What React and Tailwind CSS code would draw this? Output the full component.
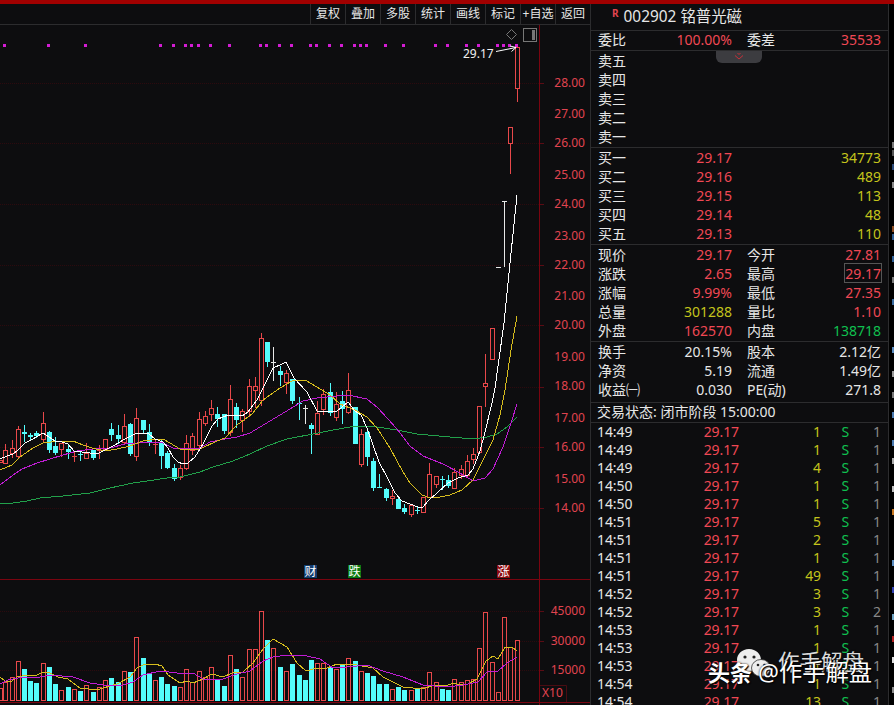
import React from "react";

const UP = "#e8484a";
const DOWN = "#54fcfc";
const FLAT = "#e8e8e8";

// x, type (u = up, d = down, f = flat), high, body top, body bottom, low, volume top, volume type
const candles = [
  [0, "u", 460, 460, 462, 462, 688],
  [5, "u", 444, 450, 463, 463, 682],
  [12, "u", 440, 448, 453, 457, 677],
  [18, "u", 426, 429, 456, 457, 661],
  [24, "d", 425, 432, 433, 441, 669],
  [30, "d", 433, 435, 436, 440, 681],
  [36, "d", 431, 433, 435, 437, 683],
  [43, "u", 412, 423, 439, 441, 663],
  [49, "d", 431, 432, 449, 452, 667],
  [55, "d", 437, 446, 452, 454, 684],
  [61, "u", 443, 443, 449, 456, 690],
  [68, "d", 444, 449, 451, 458, 687],
  [74, "u", 451, 456, 456, 461, 689],
  [80, "d", 450, 454, 454, 460, 691],
  [86, "u", 443, 453, 458, 458, 685],
  [93, "d", 450, 450, 457, 459, 692],
  [99, "u", 445, 450, 450, 458, 687],
  [105, "u", 439, 439, 449, 450, 680],
  [111, "d", 423, 429, 434, 440, 678],
  [118, "d", 425, 435, 438, 443, 682],
  [124, "u", 414, 426, 442, 444, 671],
  [130, "d", 423, 424, 453, 455, 672],
  [136, "u", 408, 418, 456, 460, 637],
  [143, "d", 420, 420, 429, 433, 658],
  [149, "d", 424, 432, 442, 445, 673],
  [155, "u", 439, 444, 444, 453, 680],
  [161, "d", 439, 443, 455, 468, 677],
  [167, "d", 451, 453, 467, 468, 684],
  [174, "d", 464, 468, 478, 480, 686],
  [180, "u", 465, 468, 477, 479, 687],
  [186, "u", 435, 443, 468, 469, 669],
  [192, "u", 433, 436, 450, 454, 682],
  [199, "u", 412, 419, 445, 447, 671],
  [205, "u", 411, 416, 423, 425, 677],
  [211, "u", 400, 408, 414, 420, 667],
  [217, "d", 407, 414, 418, 426, 679],
  [224, "d", 414, 414, 430, 433, 686],
  [230, "u", 385, 399, 432, 435, 655],
  [236, "d", 403, 407, 419, 427, 669],
  [242, "u", 409, 411, 420, 431, 677],
  [249, "u", 379, 386, 411, 416, 649],
  [255, "u", 377, 386, 390, 407, 649],
  [261, "u", 333, 338, 400, 405, 611],
  [267, "d", 342, 342, 361, 366, 640],
  [273, "f", 347, 362, 362, 380, 648, "u"],
  [280, "d", 366, 371, 374, 385, 667],
  [286, "u", 370, 373, 382, 393, 671],
  [292, "d", 379, 379, 400, 403, 664],
  [299, "d", 397, 403, 403, 419, 675],
  [305, "f", 405, 408, 408, 423, 680, "d"],
  [311, "d", 423, 425, 428, 453, 660],
  [317, "u", 401, 413, 434, 434, 663],
  [323, "u", 389, 394, 409, 414, 663],
  [330, "d", 383, 392, 412, 415, 667],
  [336, "u", 392, 404, 417, 420, 669],
  [342, "d", 391, 401, 408, 423, 665],
  [348, "u", 373, 390, 412, 413, 658],
  [355, "d", 407, 407, 443, 443, 661],
  [361, "u", 429, 434, 464, 466, 671],
  [367, "d", 428, 432, 456, 465, 673],
  [373, "d", 458, 461, 487, 490, 676],
  [379, "d", 474, 487, 487, 487, 684],
  [386, "d", 488, 489, 497, 500, 684],
  [392, "u", 490, 496, 498, 504, 689],
  [398, "d", 497, 499, 508, 508, 687],
  [404, "d", 504, 508, 511, 513, 690],
  [411, "u", 504, 505, 514, 516, 690],
  [417, "d", 506, 510, 510, 513, 689],
  [423, "u", 497, 497, 512, 512, 687],
  [429, "u", 463, 474, 497, 497, 672],
  [436, "u", 476, 476, 484, 487, 682],
  [442, "d", 476, 479, 479, 489, 689],
  [448, "d", 475, 480, 485, 487, 690],
  [454, "u", 468, 472, 488, 488, 679],
  [461, "u", 465, 469, 475, 478, 682],
  [467, "u", 455, 461, 475, 477, 680],
  [473, "u", 448, 454, 459, 463, 679],
  [479, "u", 406, 406, 452, 452, 648],
  [485, "u", 354, 383, 386, 406, 612],
  [492, "u", 328, 328, 359, 359, 662],
  [498, "f", 267, 267, 267, 267, 692, "u"],
  [504, "f", 201, 201, 201, 266, 617, "u"],
  [510, "u", 127, 127, 143, 173, 647],
  [517, "u", 47, 47, 88, 101, 640],
];

const lines = [
  {
    color: "#22a04a",
    points:
      "0,503 13,503 27,501 40,498 63,496 90,493 110,488 133,483 147,481 167,478 180,477 200,472 213,467 233,461 250,454 267,446 287,439 313,434 333,430 350,427 357,426 377,427 397,430 417,434 450,437 473,439 487,437 497,434 507,427 517,417",
  },
  {
    color: "#c01cd4",
    points:
      "0,485 13,475 22,469 37,463 50,459 63,455 77,451 93,449 110,448 125,444 137,443 150,442 163,443 173,448 200,448 210,442 225,439 237,437 250,433 270,421 290,409 303,401 317,398 337,396 348,395 367,399 378,408 397,429 410,446 423,456 443,464 460,473 473,481 485,478 493,469 503,447 512,420 517,404",
  },
  {
    color: "#d6bc1e",
    points:
      "0,470 12,465 20,457 33,448 43,443 60,441 73,441 83,445 92,448 105,451 117,449 130,446 143,441 157,439 163,439 170,443 180,449 188,450 200,449 217,441 225,438 237,425 252,414 263,400 280,388 292,381 305,380 317,387 330,395 340,404 355,410 367,417 377,428 390,448 403,472 410,483 422,495 430,498 440,497 450,495 462,490 473,480 483,460 493,440 500,415 505,390 511,350 517,316",
  },
  {
    color: "#ffffff",
    points:
      "0,459 7,456 13,454 18,450 25,443 33,439 43,433 55,441 62,442 68,444 74,451 82,452 90,453 97,454 103,451 113,446 125,439 135,434 143,433 148,433 155,439 163,442 168,448 173,457 178,462 183,464 188,463 195,457 203,444 212,426 218,419 228,415 242,416 248,412 257,400 273,368 282,364 286,362 294,378 307,392 317,411 337,411 342,407 348,402 355,411 361,415 367,428 379,462 387,477 395,493 402,501 410,504 418,507 423,507 429,500 437,493 448,483 458,478 468,475 473,469 480,451 485,432 492,403 495,388 504,323 510,263 517,195",
  },
  {
    color: "#d6bc1e",
    points:
      "0,677 5,681 12,681 17,677 27,675 37,675 43,672 50,673 58,677 68,679 80,688 97,690 103,688 117,684 130,677 137,668 145,664 155,664 162,666 168,675 180,683 187,681 193,683 203,679 212,674 223,677 232,673 243,672 253,663 263,649 273,639 287,647 297,663 306,671 317,668 327,668 337,664 357,665 373,668 383,677 403,687 422,689 435,685 448,685 454,683 460,685 468,684 477,679 486,661 493,656 498,659 505,647 512,647 517,651",
  },
  {
    color: "#c01cd4",
    points:
      "0,684 8,680 23,677 40,677 50,675 73,677 90,683 110,686 123,685 133,682 143,675 160,671 177,673 193,673 203,679 223,679 237,674 250,671 263,661 273,657 287,655 307,656 320,659 333,668 347,667 367,665 383,671 403,677 423,685 447,687 463,685 478,682 488,671 498,671 507,663 517,657",
  },
];

const dots = [
  3, 47, 84, 159, 172, 184, 190, 197, 209, 228, 259, 265, 278, 290, 309, 315, 328, 340, 353, 359,
  365, 384, 402, 434, 446, 465, 477, 496, 502, 508, 515,
];

const priceLabels = [
  ["28.00", 83], ["27.00", 114], ["26.00", 143], ["25.00", 175], ["24.00", 204],
  ["23.00", 236], ["22.00", 265], ["21.00", 296], ["20.00", 325], ["19.00", 357],
  ["18.00", 386], ["17.00", 418], ["16.00", 447], ["15.00", 479], ["14.00", 508],
  ["45000", 611], ["30000", 641], ["15000", 670],
];

const grid = [83, 143, 204, 265, 325, 387, 447, 508, 611, 641, 670];

const tags = [
  ["财", 304, "#123c6e"],
  ["跌", 348, "#0d7a12"],
  ["涨", 497, "#8c0a10"],
];

const menu = ["复权", "叠加", "多股", "统计", "画线", "标记", "+自选", "返回"];

const bids = [
  ["买一", "29.17", "34773"],
  ["买二", "29.16", "489"],
  ["买三", "29.15", "113"],
  ["买四", "29.14", "48"],
  ["买五", "29.13", "110"],
];

const R = "text-[#f04854]";
const Y = "text-[#c4c41c]";
const G = "text-[#10c050]";
const W = "text-[#e6e6e6]";

const quote = [
  ["现价", "29.17", R, "今开", "27.81", R],
  ["涨跌", "2.65", R, "最高", "29.17", R, true],
  ["涨幅", "9.99%", R, "最低", "27.35", R],
  ["总量", "301288", Y, "量比", "1.10", R],
  ["外盘", "162570", R, "内盘", "138718", G],
];

const basics = [
  ["换手", "20.15%", W, "股本", "2.12亿", W],
  ["净资", "5.19", W, "流通", "1.49亿", W],
  ["收益㈠", "0.030", W, "PE(动)", "271.8", W],
];

const ticks = [
  ["14:49", 1, 1], ["14:49", 1, 1], ["14:49", 4, 1], ["14:50", 1, 1],
  ["14:50", 1, 1], ["14:51", 5, 1], ["14:51", 2, 1], ["14:51", 1, 1],
  ["14:51", 49, 1], ["14:52", 3, 1], ["14:52", 3, 2], ["14:53", 1, 1],
  ["14:53", 1, 1], ["14:53", 1, 1], ["14:54", 1, 1], ["14:54", 13, 1],
];

const edge = [
  [142, "#777"], [150, "#555"], [164, "#2b4a78"], [182, "#888"], [226, "#8a4a20"], [234, "#2f5f94"],
  [256, "#2f5f94"], [277, "#777"], [299, "#3a6ca0"], [347, "#5a8cc0"], [371, "#999"], [392, "#777"],
  [412, "#4a7ab0"], [440, "#4a7ab0"], [458, "#aaa"], [486, "#bbb"], [509, "#c87820"], [560, "#5a8cc0"],
  [587, "#3040b0"], [614, "#6aa0c0"], [636, "#b02020"], [657, "#ddd"], [687, "#888"],
];

function Candle({ data }) {
  const [x, type, high, top, bottom, low, vol, volType] = data;
  const color = type === "u" ? UP : type === "d" ? DOWN : FLAT;
  const hollow = type === "u" && bottom - top > 1;
  const volUp = (volType || type) === "u";
  return (
    <g shapeRendering="crispEdges">
      {high < top && <rect x={x} y={high} width="1" height={top - high} fill={color} />}
      {low > bottom && <rect x={x} y={bottom} width="1" height={low - bottom + 1} fill={color} />}
      {hollow ? (
        <rect x={x - 1.5} y={top + 0.5} width="4" height={bottom - top} fill="none" stroke={color} />
      ) : (
        <rect x={x - 2} y={top} width="5" height={bottom - top + 1} fill={color} />
      )}
      {volUp ? (
        <rect x={x - 1.5} y={vol + 0.5} width="4" height={700 - vol} fill="none" stroke={UP} />
      ) : (
        <rect x={x - 2} y={vol} width="5" height={701 - vol} fill={DOWN} />
      )}
    </g>
  );
}

function Chart() {
  return (
    <svg width="590" height="680" viewBox="0 25 590 680" className="block">
      <g shapeRendering="crispEdges">
        {grid.map((y) => (
          <line key={y} x1="0" x2="544" y1={y + 0.5} y2={y + 0.5} stroke="#2c0a0e" strokeDasharray="1 1" />
        ))}
        <rect x="0" y="579" width="590" height="1" fill="#7a0410" />
        <rect x="0" y="702" width="590" height="1" fill="#7a0410" />
        <rect x="539" y="25" width="1" height="680" fill="#7a0410" />
        {grid.map((y) => (
          <rect key={y} x="540" y={y} width="4" height="1" fill="#5a0c14" />
        ))}
        {dots.map((x) => (
          <rect key={x} x={x} y="44" width="3" height="3" fill="#d41cd4" />
        ))}
      </g>

      {candles.map((c) => (
        <Candle key={c[0]} data={c} />
      ))}
      {lines.map((l, i) => (
        <polyline key={i} points={l.points} fill="none" stroke={l.color} shapeRendering="crispEdges" />
      ))}

      {/* last price marker */}
      <text x="463" y="58" fill="#f0f0f0" fontSize="12">29.17</text>
      <path d="M496 51.5 L516 47.5 M510 46 L516 47.5 L511.500 51.5" fill="none" stroke="#fff" />
      <path d="M511.500 29.5 L516.500 34.500 L511.500 39.500 L506.500 34.500 Z" fill="none" stroke="#777" />
      <rect x="523.500" y="28.500" width="13" height="13" fill="none" stroke="#777" />
      <rect x="532" y="30" width="3" height="10" fill="#777" />

      {priceLabels.map(([label, y]) => (
        <text key={label} x="585" y={y + 4} fill="#e04450" fontSize="12" textAnchor="end">
          {label}
        </text>
      ))}
      <path d="M540 685.5 H566.500 V702" fill="none" stroke="#4a0c12" />
      <text x="542" y="697" fill="#e04450" fontSize="12">X10</text>

      {tags.map(([label, x, color]) => (
        <g key={label}>
          <rect x={x} y="565" width="13" height="13" fill={color} />
          <text x={x + 0.5} y="576" fill="#fff" fontSize="12">{label}</text>
        </g>
      ))}
    </svg>
  );
}

function Row({ data }) {
  const [l1, v1, c1, l2, v2, c2, boxed] = data;
  return (
    <div className="flex h-[19px] items-center">
      <div className="flex w-[134px] justify-between">
        <span>{l1}</span>
        <span className={c1}>{v1}</span>
      </div>
      <div className="ml-[15px] flex w-[134px] justify-between">
        <span>{l2}</span>
        <span className={boxed ? `${c2} outline outline-1 outline-[#555] h-[18px] leading-[19px]` : c2}>{v2}</span>
      </div>
    </div>
  );
}

function Watermark() {
  return (
    <div className="absolute left-[708px] top-[647px] h-[44px] w-[170px] whitespace-nowrap text-white">
      <span className="absolute left-[70px] top-[3px] text-[21.5px] leading-[24px] opacity-85 [text-shadow:0_0_2px_#000]">
        作手解盘
      </span>
      <svg width="36" height="32" viewBox="0 0 36 32" className="absolute left-[28px] top-[1px]">
        <path d="M13 1 C6 1 1 6 1 12 C1 16 3 19 6 21 L5 25 L9 22.500 C18 25 25 19 25 12 C25 6 20 1 13 1 Z" fill="#eee" />
        <circle cx="9" cy="9" r="1.600" fill="#222" />
        <circle cx="18" cy="9" r="1.600" fill="#222" />
        <ellipse cx="25" cy="20" rx="9.500" ry="8.500" fill="#eee" stroke="#333" strokeWidth="0.800" />
        <path d="M28 27 L31 30 L31 25 Z" fill="#eee" />
        <circle cx="22" cy="17" r="1.300" fill="#222" />
        <circle cx="28.500" cy="17" r="1.300" fill="#222" />
      </svg>
      <span className="absolute left-0 top-[11px] text-[22px] font-bold leading-[28px] [text-shadow:0_0_2px_#000,1px_1px_1px_#000]">
        头条
      </span>
      <span className="absolute left-[50px] top-[11px] text-[23.300px] leading-[28px] [text-shadow:0_0_2px_#000,1px_1px_1px_#000]">
        @作手解盘
      </span>
    </div>
  );
}

export default function App() {
  return (
    <div className="relative flex h-[705px] w-[894px] flex-col overflow-hidden bg-[#0d0d0f] font-['Noto_Sans','Noto_Sans_CJK_SC',sans-serif] text-[#e6e6e6]">
      <div className="h-1 w-full shrink-0 bg-[#a00000]" />
      <div className="flex min-h-0 flex-1">
        <div className="w-[590px] shrink-0">
          <div className="flex h-[21px] justify-end border-b border-[#2c2c2e] text-xs leading-[20px]">
            {menu.map((m) => (
              <span key={m} className="w-[35px] border-l border-[#2c2c2e] text-center whitespace-nowrap">
                {m}
              </span>
            ))}
          </div>
          <Chart />
        </div>

        <div className="relative w-[299px] shrink-0 border-x border-[#2c2c2e] text-sm leading-[19px]">
          <div className="flex h-[26px] items-center pl-[21px]">
            <span className="mb-[9px] text-[10px] font-bold leading-none text-[#e04450]">R</span>
            <span className="mb-px ml-[5px] text-[15.400px]">002902 铭普光磁</span>
          </div>
          <div className="h-5 border-t border-[#2c2c2e] pl-[7px]">
            <div className="-mt-px">
              <Row data={["委比", "100.00%", R, "委差", "35533", R]} />
            </div>
          </div>
          <div className="h-[97px] border-t border-[#2c2c2e] pl-[7px]">
            {["卖五", "卖四", "卖三", "卖二", "卖一"].map((s) => (
              <div key={s} className="h-[19px]">{s}</div>
            ))}
          </div>
          <div className="absolute left-[125px] top-[47px] flex h-3 w-[46px] justify-center rounded-b-md bg-[#3c3c40]">
            <svg width="12" height="12" viewBox="0 0 12 12" fill="none" stroke="#c83038">
              <path d="M4.500 2 L6 3.500 L7.500 2 M2 4.500 L6 8 L10 4.500" />
            </svg>
          </div>
          <div className="h-[97px] border-t border-[#2c2c2e] pl-[7px]">
            {bids.map(([l, p, v]) => (
              <Row key={l} data={[l, p, R, "", v, Y]} />
            ))}
          </div>
          <div className="h-[97px] border-t border-[#2c2c2e] pl-[7px]">
            {quote.map((q) => (
              <Row key={q[0]} data={q} />
            ))}
          </div>
          <div className="h-[61px] border-t border-[#2c2c2e] pl-[7px]">
            {basics.map((q) => (
              <Row key={q[0]} data={q} />
            ))}
          </div>
          <div className="h-5 border-t border-[#2c2c2e] pl-1.5 leading-[17px]">交易状态: 闭市阶段 15:00:00</div>
          <div className="border-t border-[#2c2c2e] pl-1.5 leading-[18px] tracking-[-0.1px]">
            {ticks.map(([t, v, n], i) => (
              <div key={i} className="flex h-[18px] text-right">
                <span className="w-[35px] text-left">{t}</span>
                <span className="w-[107px] text-[#f04854]">29.17</span>
                <span className="w-[82px] text-[#c4c41c]">{v}</span>
                <span className="w-[28px] text-[#10c050]">S</span>
                <span className="w-[32px] text-[#888]">{n}</span>
              </div>
            ))}
          </div>
        </div>

        {/* sliver of the neighbouring panel */}
        <svg width="5" height="701" viewBox="0 4 5 701" className="bg-black">
          {edge.map(([y, color]) => (
            <rect key={y} x="3" y={y} width="2" height="6" fill={color} />
          ))}
        </svg>
      </div>
      <Watermark />
    </div>
  );
}
